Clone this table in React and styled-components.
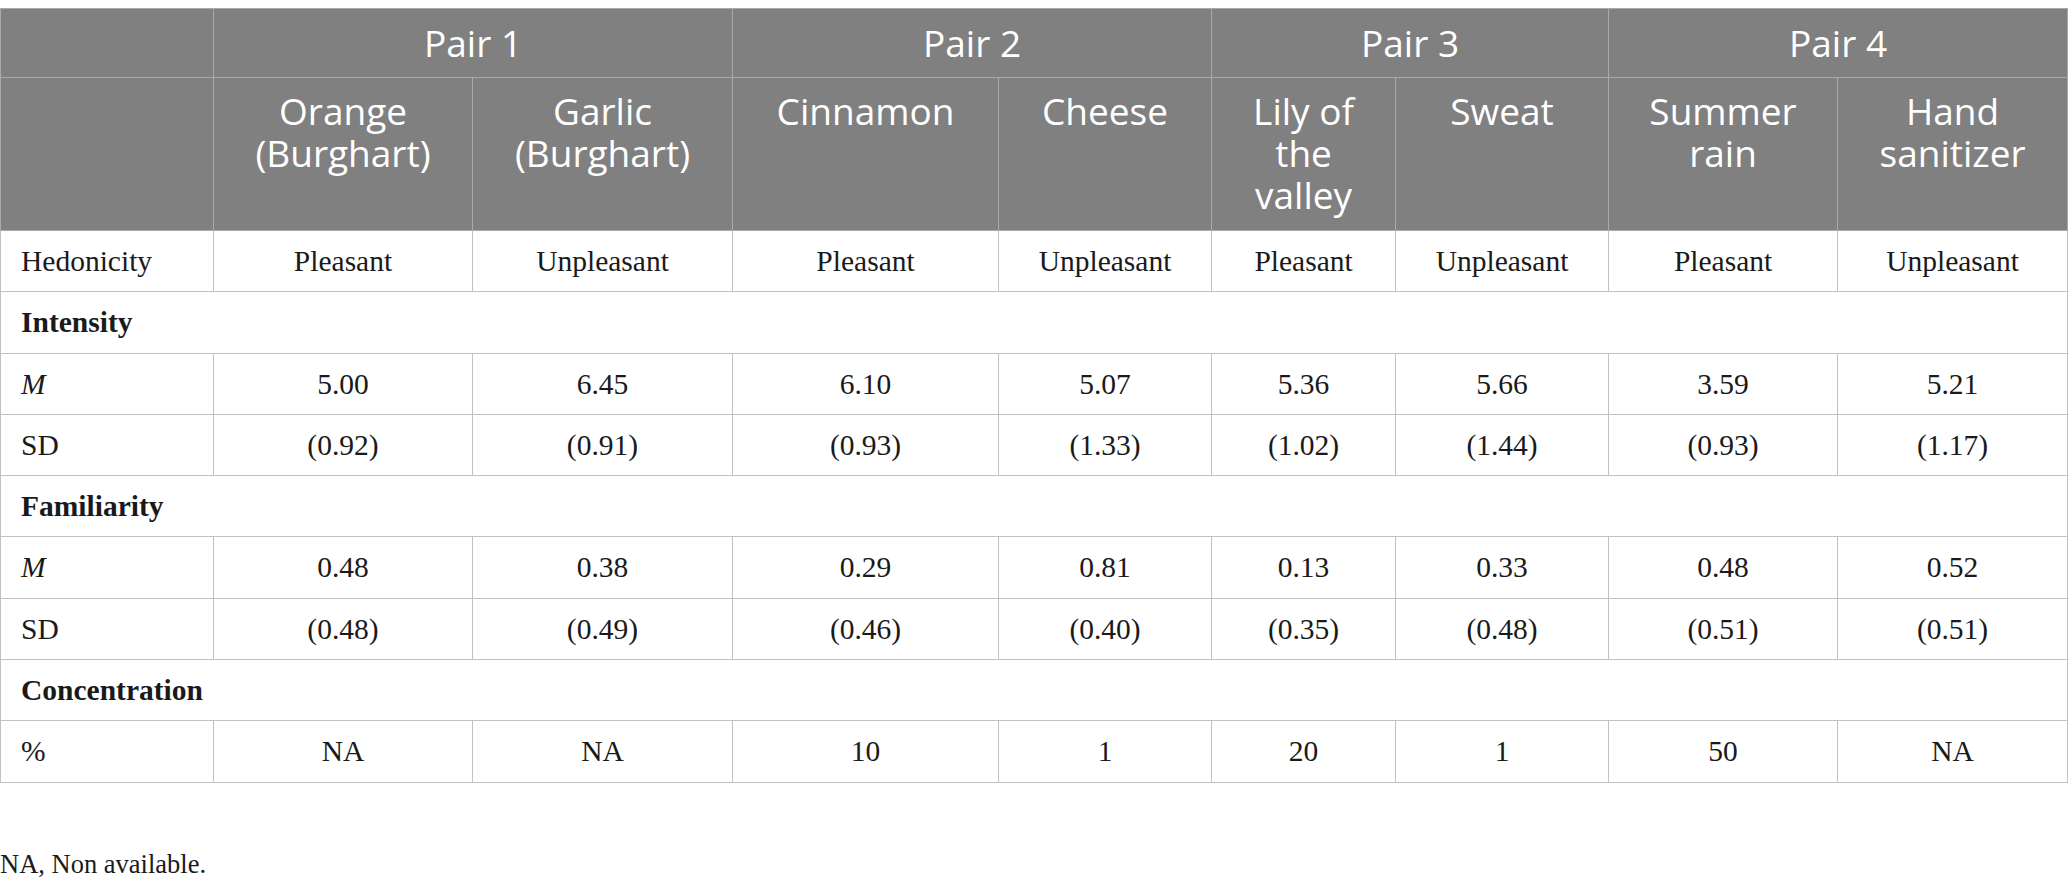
import React from "react";
import styled, { createGlobalStyle } from "styled-components";

const GlobalStyle = createGlobalStyle`
  html, body { margin: 0; padding: 0; background: #ffffff; }
  body { font-family: "Liberation Serif", "Times New Roman", serif; color: #1a1a1a; }
`;

const Page = styled.div`
  padding-top: 8px;
  width: 2067px;
`;

const Table = styled.table`
  width: 2067px;
  border-collapse: collapse;
  table-layout: fixed;
  border: 1px solid #c2c2c2;
`;

const HeadCell = styled.th`
  background: #808080;
  color: #ffffff;
  font-family: "Open Sans", "Noto Sans", sans-serif;
  font-weight: 400;
  font-size: 37px;
  line-height: 42px;
  text-align: center;
  vertical-align: ${(p) => (p.$top ? "top" : "middle")};
  padding: ${(p) => (p.$top ? "12px 8px 14px" : "13px 8px")};
  border: 1px solid #a9a9a9;
`;

const Cell = styled.td`
  font-family: "Liberation Serif", "Times New Roman", serif;
  font-size: 29.5px;
  line-height: 34.3px;
  padding: 13px ${(p) => (p.$first ? "20px" : "10px")};
  text-align: ${(p) => (p.$first ? "left" : "center")};
  font-weight: ${(p) => (p.$bold ? 700 : 400)};
  font-style: ${(p) => (p.$italic ? "italic" : "normal")};
  border: 1px solid #c2c2c2;
  vertical-align: middle;
  color: #1a1a1a;
  white-space: nowrap;
`;

const Footnote = styled.p`
  margin: 66px 0 0 0;
  font-family: "Liberation Serif", "Times New Roman", serif;
  font-size: 26.5px;
  line-height: 30px;
  color: #1a1a1a;
`;

const widths = [213, 259, 260, 266, 213, 184, 213, 229, 230];

const pairs = ["Pair 1", "Pair 2", "Pair 3", "Pair 4"];
const odors = [
  ["Orange", "(Burghart)"],
  ["Garlic", "(Burghart)"],
  ["Cinnamon"],
  ["Cheese"],
  ["Lily of", "the", "valley"],
  ["Sweat"],
  ["Summer", "rain"],
  ["Hand", "sanitizer"],
];

const rows = [
  { type: "data", label: "Hedonicity", values: ["Pleasant", "Unpleasant", "Pleasant", "Unpleasant", "Pleasant", "Unpleasant", "Pleasant", "Unpleasant"] },
  { type: "section", label: "Intensity" },
  { type: "data", label: "M", italic: true, values: ["5.00", "6.45", "6.10", "5.07", "5.36", "5.66", "3.59", "5.21"] },
  { type: "data", label: "SD", values: ["(0.92)", "(0.91)", "(0.93)", "(1.33)", "(1.02)", "(1.44)", "(0.93)", "(1.17)"] },
  { type: "section", label: "Familiarity" },
  { type: "data", label: "M", italic: true, values: ["0.48", "0.38", "0.29", "0.81", "0.13", "0.33", "0.48", "0.52"] },
  { type: "data", label: "SD", values: ["(0.48)", "(0.49)", "(0.46)", "(0.40)", "(0.35)", "(0.48)", "(0.51)", "(0.51)"] },
  { type: "section", label: "Concentration" },
  { type: "data", label: "%", values: ["NA", "NA", "10", "1", "20", "1", "50", "NA"] },
];

export default function App() {
  return (
    <Page>
      <GlobalStyle />
      <Table>
        <colgroup>
          {widths.map((w, i) => (
            <col key={i} style={{ width: w }} />
          ))}
        </colgroup>
        <thead>
          <tr>
            <HeadCell />
            {pairs.map((p) => (
              <HeadCell key={p} colSpan={2}>
                {p}
              </HeadCell>
            ))}
          </tr>
          <tr>
            <HeadCell $top />
            {odors.map((lines, i) => (
              <HeadCell key={i} $top>
                {lines.map((l, j) => (
                  <React.Fragment key={j}>
                    {j > 0 && <br />}
                    {l}
                  </React.Fragment>
                ))}
              </HeadCell>
            ))}
          </tr>
        </thead>
        <tbody>
          {rows.map((r, i) =>
            r.type === "section" ? (
              <tr key={i}>
                <Cell $first $bold colSpan={9}>
                  {r.label}
                </Cell>
              </tr>
            ) : (
              <tr key={i}>
                <Cell $first $italic={r.italic}>
                  {r.label}
                </Cell>
                {r.values.map((v, j) => (
                  <Cell key={j}>{v}</Cell>
                ))}
              </tr>
            )
          )}
        </tbody>
      </Table>
      <Footnote>NA, Non available.</Footnote>
    </Page>
  );
}
